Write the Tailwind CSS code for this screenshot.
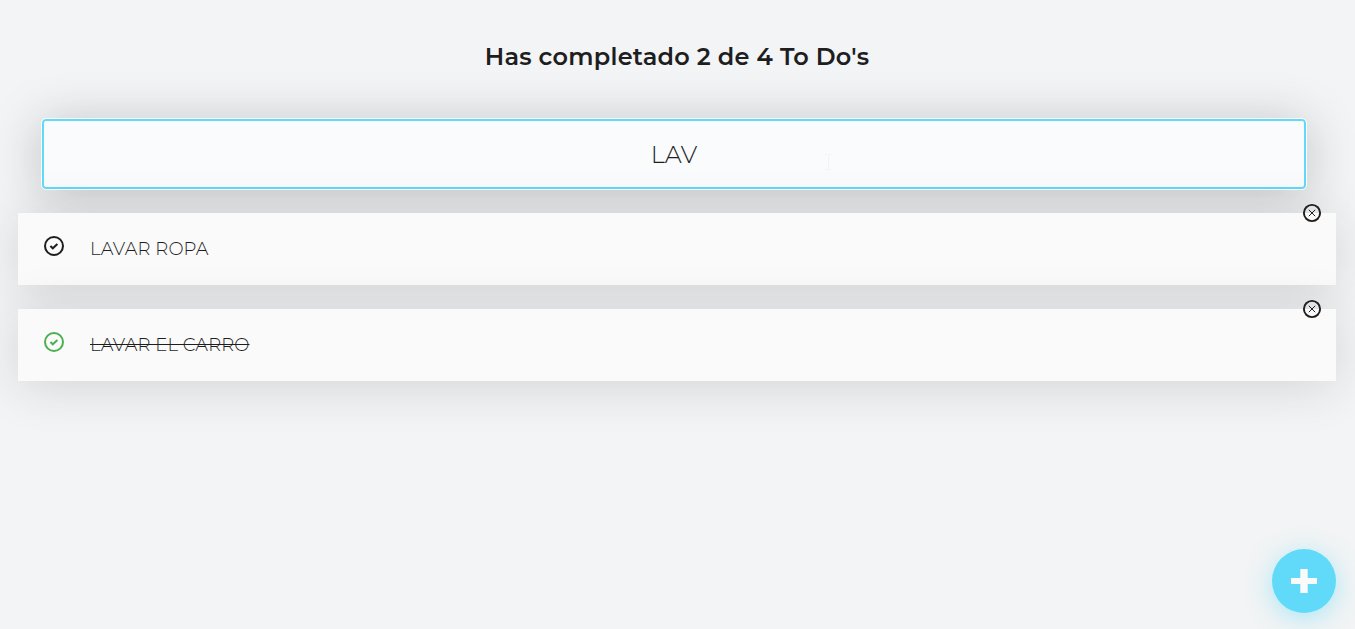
<!DOCTYPE html>
<html lang="es">
<head>
<meta charset="utf-8">
<title>To Do's</title>
<script src="https://cdn.jsdelivr.net/npm/@tailwindcss/browser@4"></script>
</head>
<body class="bg-[#f2f4f5] h-[629px] overflow-hidden font-[Montserrat,Inter,sans-serif] text-[#1e1e1f]">
<main class="flex flex-col pl-[18px] pr-[19px]">
  <h2 class="h-[119px] pt-[42px] text-center text-[24px] leading-[30px] font-semibold tracking-[0.22px] whitespace-nowrap">Has completado 2 de 4 To Do's</h2>
  <div class="ml-6 mr-[30px] h-[70px] rounded-[4px] border-2 border-[#61dafa] bg-[#f9fbfd] outline outline-white shadow-[0_5px_50px_rgba(32,35,41,0.25)] flex items-center justify-center pt-0.5 text-[24px] font-light">LAV</div>
  <ul class="mt-6 flex flex-col gap-6 text-[18px] font-light leading-[24px]">
    <li class="relative h-[72px] bg-[#fafafa] shadow-[0_5px_50px_rgba(32,35,41,0.15)] flex items-start pl-6">
      <svg class="mt-[21px] size-6 text-[#1e1e1f]" viewBox="0 0 24 24" fill="none" stroke="currentColor" stroke-width="2"><circle cx="12" cy="12" r="9"/><path d="M8.4 12l2.4 2.3 4.6-4.2"/></svg>
      <span class="ml-6 mt-6 tracking-[0.12px]">LAVAR ROPA</span>
      <svg class="absolute right-3 -top-3 size-6" viewBox="0 0 24 24" fill="none" stroke="#1e1e1f"><circle cx="12" cy="12" r="8.1" stroke-width="1.9"/><path d="M8.8 8.8l6.4 6.4M15.2 8.8l-6.4 6.4" stroke-width="1"/></svg>
    </li>
    <li class="relative h-[72px] bg-[#fafafa] shadow-[0_5px_50px_rgba(32,35,41,0.15)] flex items-start pl-6">
      <svg class="mt-[21px] size-6 text-[#4caf50]" viewBox="0 0 24 24" fill="none" stroke="currentColor" stroke-width="2"><circle cx="12" cy="12" r="9"/><path d="M8.4 12l2.4 2.3 4.6-4.2"/></svg>
      <span class="ml-6 mt-6 tracking-[0.12px] line-through">LAVAR EL CARRO</span>
      <svg class="absolute right-3 -top-3 size-6" viewBox="0 0 24 24" fill="none" stroke="#1e1e1f"><circle cx="12" cy="12" r="8.1" stroke-width="1.9"/><path d="M8.8 8.8l6.4 6.4M15.2 8.8l-6.4 6.4" stroke-width="1"/></svg>
    </li>
  </ul>
</main>
<svg class="absolute left-[824px] top-[154px] w-2 h-4" viewBox="0 0 8 16" fill="none" stroke="#f0f2f3"><path d="M1 .5h2.5M5 .5h2.5M4.5 1v14M1 15.5h2.5M5 15.5h2.5"/></svg>
<button class="fixed left-[1272px] top-[549px] size-16 rounded-full bg-[#61dafa] shadow-[0_5px_25px_rgba(97,218,250,0.5)] flex items-center justify-center" aria-label="Agregar">
  <svg class="w-[26px] h-6" viewBox="0 0 26 24" fill="#fafafa"><path d="M9.3 0h7.4v8.9H26v6.2h-9.3V24H9.3v-8.9H0V8.9h9.3z"/></svg>
</button>
</body>
</html>
